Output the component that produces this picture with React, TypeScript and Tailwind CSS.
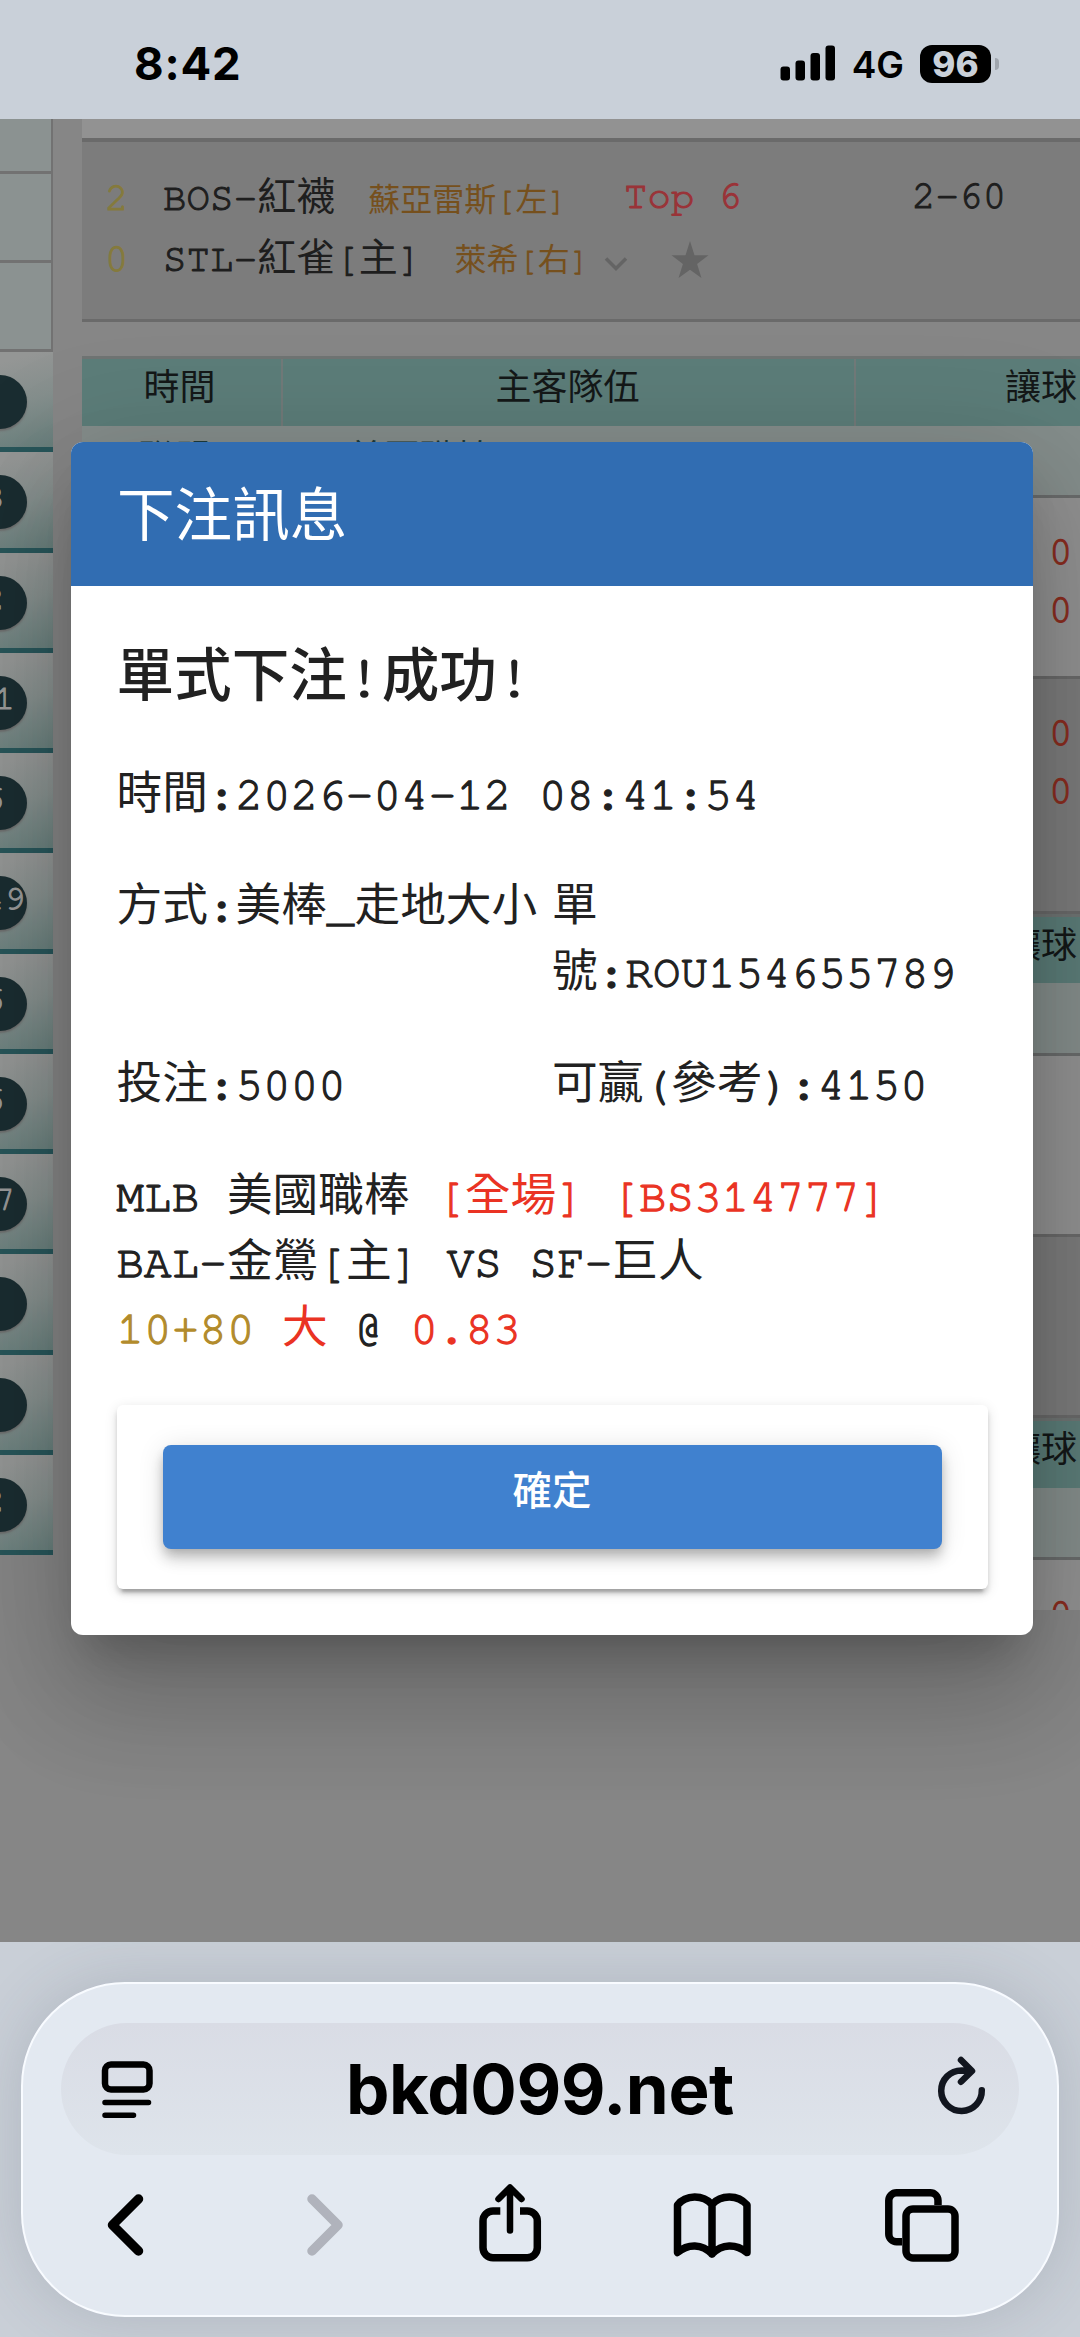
import { clsx } from 'clsx';

// latin runs are thickened, the typewriter face is too thin next to the CJK glyphs
function Mono({ children }: { children: string }) {
  return (
    <>
      {children.split(/([\x20-\x7e]+)/).filter(Boolean).map((run, i) => (
        /[\x20-\x7e]/.test(run)
          ? <span key={i} className="tracking-[0.004em] [-webkit-text-stroke-width:0.028em]">{run}</span>
          : run
      ))}
    </>
  );
}

const BADGES = ['', '3', '2', '11', '6', '149', '6', '6', '17', '', '', '2'];

function StatusBar() {
  return (
    <header className="flex h-[119px] shrink-0 items-center bg-[#c9d0d9] pt-[9px] pr-[81px] pl-[134px] font-['Inter',sans-serif] text-black">
      <span className="text-[45.5px] leading-none font-bold tracking-[0.8px]">8:42</span>
      <svg className="mb-[2px] ml-auto" width="56" height="36" viewBox="0 0 56 36">
        <rect x="0.500" y="21.500" width="9.500" height="14" rx="3" />
        <rect x="15.500" y="15.500" width="9.500" height="20" rx="3" />
        <rect x="30.500" y="8" width="9.500" height="27.500" rx="3" />
        <rect x="45.500" y="0.500" width="9.500" height="35" rx="3" />
      </svg>
      <span className="ml-[16px] text-[37px] leading-none font-semibold">4G</span>
      <div className="ml-[16px] flex h-[38px] w-[71px] items-center justify-center rounded-[12px] bg-black text-[35px] leading-none font-extrabold text-[#c9d0d9]">96</div>
      <div className="ml-[4px] h-[12px] w-[4px] rounded-r-full bg-[#9fa5ad]" />
    </header>
  );
}

function Sidebar() {
  return (
    <aside className="w-[53px] shrink-0 overflow-hidden">
      <div className="h-[55px] border-r-2 border-b-3 border-[#727272] bg-[#8b9291]" />
      <div className="h-[89px] border-r-2 border-b-3 border-[#727272] bg-[#8b9291]" />
      <div className="h-[89px] border-r-2 border-b-3 border-[#727272] bg-[#8b9291]" />
      {BADGES.map((n, i) => (
        <div key={i} className="h-[100.25px] border-b-5 border-[#28565a] bg-linear-165 from-[#949695] from-10% via-[#858f8d] to-[#687f7c] pt-[23px]">
          <div className="-ml-[27px] flex h-[54px] w-[54px] justify-center rounded-full bg-[#1a2d31] pt-[3px] shadow-[0_2px_2px_#6d6d6d]">
            <span className="-ml-[12px] text-[35px] leading-[40px] text-[#9a9a9a]"><Mono>{n}</Mono></span>
          </div>
        </div>
      ))}
    </aside>
  );
}

function TableHead({ className }: { className?: string }) {
  return (
    <div className={clsx('flex border-t-3 border-[#6f7473] bg-[#5c7d79] text-[36px] leading-[61px] text-[#141818]', className)}>
      <div className="w-[201px] shrink-0 border-r-2 border-[#717a79] pr-[4px] text-center">時間</div>
      <div className="w-[573px] shrink-0 border-r-2 border-[#717a79] pr-[2px] text-center">主客隊伍</div>
      <div className="w-[370px] shrink-0 text-center">讓球</div>
    </div>
  );
}

function LeagueRow({ className, text }: { className?: string; text?: boolean }) {
  return (
    <div className={clsx('flex border-b-3 border-[#6a6c6c] bg-[#858e8c] text-[36px] leading-[68px] text-[#1d3b3b]', className)}>
      {text && (
        <>
          <div className="w-[188px] pl-[57px]">聯盟</div>
          <div className="pl-[78px]">美國職棒</div>
        </>
      )}
    </div>
  );
}

function OddsRow({ className, odds = [] }: { className?: string; odds?: string[] }) {
  return (
    <div className={clsx('flex flex-col items-end overflow-hidden border-[#6a6a6a]', className)}>
      {odds.map((o, i) => (
        <div key={i} className="-mr-[53px] w-[84px] text-[39px] leading-[57.5px] text-[#8a2c1e]"><Mono>{o}</Mono></div>
      ))}
    </div>
  );
}

function OddsTable() {
  return (
    <section className="ml-[29px] min-w-0 flex-1 overflow-hidden">
      <div className="h-[23px] border-b-4 border-[#6a6a6a] bg-[#929292]" />
      <div className="flex h-[180px] border-b-3 border-[#6a6a6a] bg-[#7c7c7c] pt-[27px] text-[39px] leading-[60.5px] text-[#1e1e1e]">
        <div className="w-[81px] pl-[23px] text-[#857a3c]">
          <div><Mono>2</Mono></div>
          <div><Mono>0</Mono></div>
        </div>
        <div className="w-[461px] whitespace-nowrap">
          <div className="flex h-[60.5px]">
            <span><Mono>BOS-紅襪</Mono></span>
            <span className="ml-[33px] pt-[2px] text-[32px] text-[#76501d]"><Mono>蘇亞雷斯[左]</Mono></span>
          </div>
          <div className="flex h-[60.5px] items-center">
            <span><Mono>STL-紅雀[主]</Mono></span>
            <span className="ml-[33px] pt-[3px] text-[32px] text-[#76501d]"><Mono>萊希[右]</Mono></span>
            <svg className="mt-[8px] ml-[15px] shrink-0" width="24" height="16" viewBox="0 0 24 16" fill="none" stroke="#646464" strokeWidth="3.500">
              <path d="M2 2.500 12 12.500 22 2.500" />
            </svg>
            <svg className="ml-[43px] shrink-0" width="38" height="37" viewBox="0 0 24 24" fill="#646464">
              <path d="M12 18.600 19.420 24 16.600 14.900 24 9.300H14.900L12 0 9.100 9.300H0l7.400 5.600L4.580 24z" />
            </svg>
          </div>
        </div>
        <div className="-mt-[2px] w-[288px] text-[#9a3338]"><Mono>Top 6</Mono></div>
        <div className="-mt-[2px]"><Mono>2-60</Mono></div>
      </div>
      <div className="h-[34px]" />
      <TableHead className="h-[70px]" />
      <LeagueRow className="h-[72px]" text />
      <OddsRow className="h-[181px] border-b-3 bg-[#929292] pt-[26px]" odds={['0.95', '0.95']} />
      <OddsRow className="h-[235px] border-b-3 bg-[#7c7c7c] pt-[26px]" odds={['0.95', '0.95']} />
      <TableHead className="h-[69px]" />
      <LeagueRow className="h-[73px]" />
      <OddsRow className="h-[181px] border-b-3 bg-[#929292]" />
      <OddsRow className="h-[181px] border-b-3 bg-[#7c7c7c]" />
      <TableHead className="h-[70px]" />
      <LeagueRow className="h-[72px]" />
      <OddsRow className="h-[50px] bg-[#929292] pt-[26px]" odds={['0.95']} />
    </section>
  );
}

function BetDialog() {
  return (
    <div className="absolute top-[323px] left-[71px] h-[1193px] w-[962px] rounded-[12px] bg-white text-[45.7px] leading-[66px] text-[#212121] shadow-[0_30px_40px_-19px_rgba(0,0,0,0.2),0_64px_102px_8px_rgba(0,0,0,0.14),0_24px_124px_21px_rgba(0,0,0,0.12)]">
      <h1 className="h-[144px] rounded-t-[12px] bg-[#316db2] pl-[46px] text-[57.6px] leading-[154px] text-white">下注訊息</h1>
      <div className="px-[45.5px]">
        <h2 className="pt-[51px] text-[57.6px] leading-[84px] font-medium"><Mono>單式下注!成功!</Mono></h2>
        <p className="mt-[41px]"><Mono>時間:2026-04-12 08:41:54</Mono></p>
        <div className="mt-[46px] grid grid-cols-2 gap-y-[46px] whitespace-nowrap">
          <p><Mono>方式:美棒_走地大小</Mono></p>
          <p>單<br /><Mono>號:ROU154655789</Mono></p>
          <p><Mono>投注:5000</Mono></p>
          <p><Mono>可贏(參考):4150</Mono></p>
        </div>
        <div className="mt-[46px] whitespace-nowrap">
          <p><Mono>MLB 美國職棒 </Mono><span className="text-[#ea3323]"><Mono>[全場] [BS314777]</Mono></span></p>
          <p><Mono>BAL-金鶯[主] VS SF-巨人</Mono></p>
          <p>
            <span className="text-[#b28b2c]"><Mono>10+80</Mono></span>{' '}
            <span className="text-[#ea3323]">大</span><Mono> @ </Mono>
            <span className="text-[#ea3323]"><Mono>0.83</Mono></span>
          </p>
        </div>
        <div className="mt-[43px] rounded-[6px] px-[46px] py-[40px] shadow-[0_8px_3px_-5px_rgba(0,0,0,0.2),0_5px_5px_rgba(0,0,0,0.14),0_3px_13px_rgba(0,0,0,0.12)]">
          <button className="block h-[104px] w-full rounded-[8px] bg-[#4081cf] pb-[8px] text-[39.5px] leading-[95px] font-medium text-white shadow-[0_5px_11px_-3px_rgba(0,0,0,0.2),0_11px_13px_rgba(0,0,0,0.14),0_3px_27px_rgba(0,0,0,0.12)]">確定</button>
        </div>
      </div>
    </div>
  );
}

function BrowserBar() {
  return (
    <footer className="h-[395px] shrink-0 overflow-hidden bg-[#c9cfd7] px-[21px] pt-[40px] font-['Inter',sans-serif]">
      <div className="h-[335px] rounded-[104px] border-2 border-[#f8fbff] bg-[#e3e9f1] px-[38px] pt-[39px] shadow-[0_0_60px_rgba(60,70,90,0.18)]">
        <div className="flex h-[132px] items-center justify-between rounded-[66px] bg-linear-to-b from-[#d9dce5] to-[#dee4eb] pr-[33px] pl-[40px]">
          <svg width="54" height="58" viewBox="0 0 54 58" fill="none" stroke="#000" strokeWidth="6.500" strokeLinecap="round">
            <rect x="4" y="4.500" width="44.500" height="25" rx="6" />
            <path d="M4 42.500H47.500M4 55.200H32.500" strokeWidth="5.500" />
          </svg>
          <span className="mr-[11px] text-[69px] leading-none font-bold tracking-[-0.4px] text-black">bkd099.net</span>
          <svg className="overflow-visible" width="50" height="60" viewBox="0 0 50 60" fill="none" stroke="#12161f" strokeWidth="6.500" strokeLinecap="round" strokeLinejoin="round">
            <path d="M45.800 31.200A20.300 20.300 0 1 1 25.500 11.400L35 12M25 1 36 12 25 22.800" />
          </svg>
        </div>
        <div className="mt-[29px] flex h-[82px] items-center pl-[46px]">
          <svg width="38" height="62" viewBox="0 0 38 62" fill="none" stroke="#000" strokeWidth="9.500" strokeLinecap="round" strokeLinejoin="round">
            <path d="M31.500 5 5.500 31 31.500 57" />
          </svg>
          <svg className="ml-[161px]" width="38" height="62" viewBox="0 0 38 62" fill="none" stroke="#b0b3bc" strokeWidth="9.500" strokeLinecap="round" strokeLinejoin="round">
            <path d="M6 5 32 31 6 57" />
          </svg>
          <svg className="ml-[133px] overflow-visible" width="66" height="80" viewBox="0 0 66 80" fill="none" stroke="#000" strokeWidth="7.500">
            <path d="M23.300 26H16A10 10 0 0 0 6 36V62.800A10 10 0 0 0 16 72.800H50.300A10 10 0 0 0 60.300 62.800V36A10 10 0 0 0 50.300 26H43" />
            <path d="M33 45.500V4M21.500 14 33 2.500 44.500 14" strokeWidth="6.500" strokeLinecap="round" strokeLinejoin="round" />
          </svg>
          <svg className="ml-[129px] overflow-visible" width="80" height="66" viewBox="0 0 80 66" fill="none" stroke="#000" strokeWidth="7.500" strokeLinecap="round" strokeLinejoin="round">
            <path d="M5.500 13C14 2.500 31 2.500 40 12.500 49 2.500 66 2.500 75 13V60.500C64 51.500 50 51.500 40 62 30 51.500 16 51.500 5.500 60.500ZM40 12.500V62" />
          </svg>
          <svg className="ml-[131px]" width="78" height="76" viewBox="0 0 78 76" fill="none" stroke="#000" strokeWidth="7.500">
            <path d="M55 18V13.500A7.700 7.700 0 0 0 47.300 5.800H13.500A7.700 7.700 0 0 0 5.800 13.500V47A7.700 7.700 0 0 0 13.500 54.700H19" />
            <rect x="23" y="22" width="49" height="49" rx="7" />
          </svg>
        </div>
      </div>
    </footer>
  );
}

export default function App() {
  return (
    <div className="flex h-[2337px] w-[1080px] flex-col overflow-hidden bg-[#868686]">
      <StatusBar />
      <main className="relative flex h-[1823px] shrink-0 items-start overflow-hidden font-['FreeMono','Liberation_Mono','Noto_Sans_CJK_TC',monospace]">
        <Sidebar />
        <OddsTable />
        <BetDialog />
      </main>
      <BrowserBar />
    </div>
  );
}
